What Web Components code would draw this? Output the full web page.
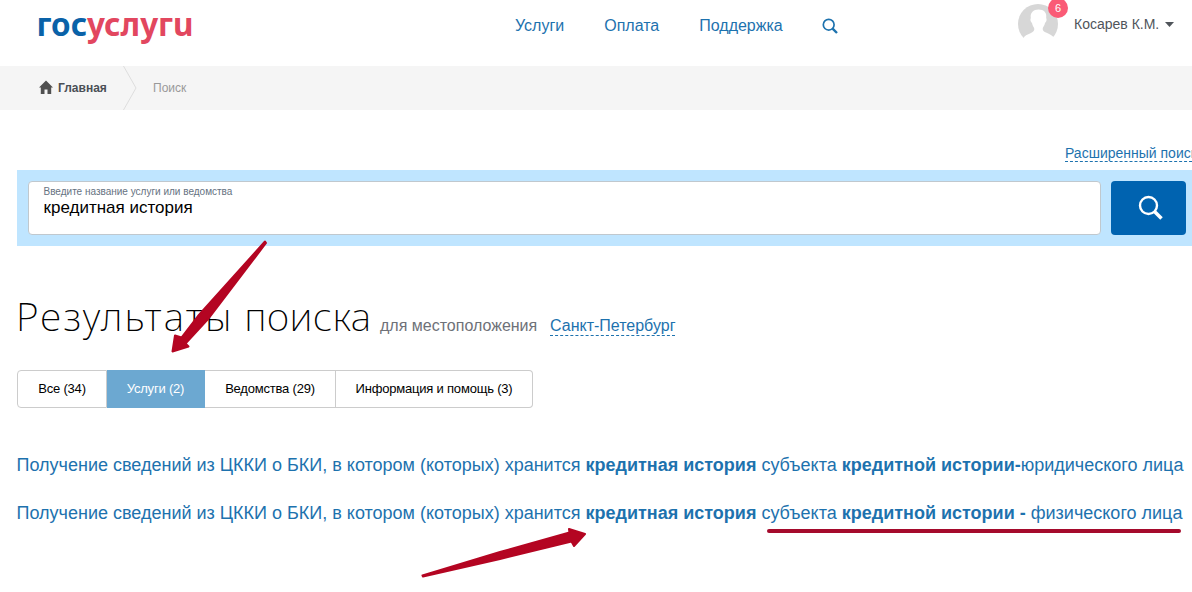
<!DOCTYPE html>
<html lang="ru">
<head>
<meta charset="utf-8">
<title>Поиск</title>
<style>
  body {
    margin: 0;
    width: 1192px;
    height: 592px;
    overflow: hidden;
    background: #fff;
    font-family: "Liberation Sans", Arial, sans-serif;
    color: #000;
  }
</style>
</head>
<body>
<search-page></search-page>

<script>
class SiteHeader extends HTMLElement {
  connectedCallback() {
    this.attachShadow({ mode: 'open' });
    this.shadowRoot.innerHTML = `
      <style>
        :host {
          display: flex;
          height: 66px;
          box-sizing: border-box;
          padding-left: 37px;
        }

        .logo {
          width: 478px;
          height: 60px;
          flex: none;
        }

        .logo text {
          font-family: "Noto Sans", sans-serif;
          font-weight: 700;
          font-size: 32px;
        }

        nav {
          display: flex;
          gap: 40px;
          padding-top: 16px;
          width: 503px;
          flex: none;
          font-size: 16px;
          line-height: 20px;
        }

        a {
          color: #1d72ae;
          text-decoration: none;
          white-space: nowrap;
        }

        nav svg {
          margin: 2px 0 0 -1px;
        }

        .user {
          display: flex;
          font-size: 14px;
          line-height: 20px;
          color: #50555b;
        }

        .avatar {
          position: relative;
          width: 56px;
          height: 50px;
        }

        .badge {
          position: absolute;
          left: 30px;
          top: -2px;
          width: 20px;
          height: 20px;
          border-radius: 50%;
          background: #fa5b76;
          color: #fff;
          font-size: 11px;
          text-align: center;
        }

        .name {
          margin-top: 14px;
          white-space: nowrap;
        }

        .caret {
          margin: 22px 0 0 6px;
        }
      </style>

      <svg class="logo" viewBox="0 0 478 60">
        <text y="36" x="-0.500" textLength="157" lengthAdjust="spacingAndGlyphs" fill="#e2475f"><tspan fill="#0a62a8">гос</tspan>услугu</text>
      </svg>
      <nav>
        <a>Услуги</a>
        <a>Оплата</a>
        <a>Поддержка</a>
        <svg width="16" height="16" viewBox="0 0 16 16" fill="none" stroke="#1d72ae">
          <circle cx="6.7" cy="6.7" r="5.4" stroke-width="1.7"/>
          <path d="M10.6 10.6L15 15" stroke-width="2.4"/>
        </svg>
      </nav>
      <div class="user">
        <div class="avatar">
          <svg width="42" height="46" viewBox="0 0 42 46">
            <circle cx="20" cy="24" r="20" fill="#d7d7d7"/>
            <path fill="#fff" d="M20.500 9.500c-5 0-8.500 3-7.700 8.500-.9 1.500-.2 4.200 1.200 5 .5 2.700 1.700 4 2.200 5.300.5 2.500-.8 3.500-3.200 4.600C9 34.500 6.500 35.500 5 38.500L8 45h24l4-7c-1.500-2.500-4-3.700-8-5.500-2.500-1.100-3.700-2.300-3.200-4.500.5-1.300 1.700-2.500 2.200-5 1.400-.8 2.100-3.500 1.200-5 .8-5.500-2.200-8.500-7.700-8.500z"/>
          </svg>
          <span class="badge">6</span>
        </div>
        <span class="name">Косарев К.М.</span>
        <svg class="caret" width="9" height="5"><path d="M0 0h9L4.500 5z" fill="#50555b"/></svg>
      </div>
    `;
  }
}

class BreadCrumbs extends HTMLElement {
  connectedCallback() {
    this.attachShadow({ mode: 'open' });
    this.shadowRoot.innerHTML = `
      <style>
        :host {
          display: flex;
          align-items: center;
          height: 44px;
          padding-left: 39px;
          background: #f5f5f5;
          font-size: 12px;
          color: #999;
        }

        .home {
          margin: 0 5px 2px 0;
        }

        b {
          width: 65px;
          color: #4a4f55;
        }

        .sep {
          margin-right: 16px;
        }
      </style>
      <svg class="home" width="14" height="14" viewBox="0 0 14 14">
        <path fill="#505050" d="M7 0.500L14 7.500h-1.800V14H8.500V9.500h-3V14H1.800V7.500H0z"/>
      </svg>
      <b>Главная</b>
      <svg class="sep" width="14" height="44" fill="none" stroke="#ddd"><path d="M.5 0L13 22 .5 44"/></svg>
      <span>Поиск</span>
    `;
  }
}

class SearchBar extends HTMLElement {
  connectedCallback() {
    this.attachShadow({ mode: 'open' });
    this.shadowRoot.innerHTML = `
      <style>
        :host {
          display: block;
          padding-left: 17px;
        }

        .advanced {
          display: flex;
          height: 60px;
          padding-left: 1048px;
          align-items: flex-end;
          box-sizing: border-box;
          font-size: 14px;
          white-space: nowrap;
        }

        .advanced a {
          color: #1d72ae;
          line-height: 16px;
          margin-bottom: 8px;
          border-bottom: 1px dashed #1d72ae;
        }

        .bar {
          display: flex;
          gap: 10px;
          height: 76px;
          box-sizing: border-box;
          padding: 11px 6px 11px 11px;
          background: #bfe5ff;
        }

        .field {
          flex: 1;
          box-sizing: border-box;
          border: 1px solid #c0c8ce;
          border-radius: 4px;
          background: #fff;
          padding: 4px 14.500px;
        }

        label {
          display: block;
          font-size: 10px;
          line-height: 12px;
          color: #66727f;
        }

        .value {
          font-size: 17px;
          line-height: 20px;
        }

        .button {
          display: flex;
          width: 75px;
          border-radius: 4px;
          background: #0063b0;
        }

        .button svg {
          margin: 14px 0 0 27px;
        }
      </style>
      <div class="advanced"><a>Расширенный поиск</a></div>
      <div class="bar">
        <div class="field">
          <label>Введите название услуги или ведомства</label>
          <div class="value">кредитная история</div>
        </div>
        <div class="button">
          <svg width="26" height="26" viewBox="0 0 26 26" fill="none" stroke="#fff">
            <circle cx="10.500" cy="10.500" r="8.500" stroke-width="2.400"/>
            <path d="M16.500 16.500L23.500 23.500" stroke-width="3.500"/>
          </svg>
        </div>
      </div>
    `;
  }
}

class ResultTab extends HTMLElement {
  connectedCallback() {
    this.attachShadow({ mode: 'open' });
    this.shadowRoot.innerHTML = `
      <style>
        :host {
          box-sizing: border-box;
          height: 38px;
          border: 1px solid #ccc;
          border-left-width: 0;
          text-align: center;
          font-size: 13px;
          letter-spacing: -0.2px;
          line-height: 36px;
          white-space: nowrap;
        }

        :host(:first-child) {
          border-left-width: 1px;
          border-radius: 4px 0 0 4px;
        }

        :host(:last-child) {
          border-radius: 0 4px 4px 0;
        }

        :host([active]) {
          border-color: #6ca8d1;
          background: #6ca8d1;
          color: #fff;
        }
      </style>
      <slot></slot>
    `;
  }
}

class ResultLink extends HTMLElement {
  connectedCallback() {
    this.attachShadow({ mode: 'open' });
    this.shadowRoot.innerHTML = `
      <style>
        :host {
          display: block;
          height: 48px;
          color: #1d72ae;
          font-size: 18px;
          line-height: 22px;
          white-space: nowrap;
        }
      </style>
      <slot></slot>
    `;
  }
}

// Hand-drawn pointers laid over the page
class PageMarks extends HTMLElement {
  connectedCallback() {
    this.attachShadow({ mode: 'open' });
    this.shadowRoot.innerHTML = `
      <style>
        :host {
          position: absolute;
          left: 0;
          top: 0;
        }

        svg {
          display: block;
        }
      </style>
      <svg width="1192" height="592" fill="#b40522" stroke="#b40522" stroke-linejoin="round" stroke-linecap="round">
        <path d="M265 241.500L198 316 181.500 337.500 175 335.500 172.500 351.500 188.500 346.500 185.500 343.500 209 318 266 243z" stroke-width="2"/>
        <path d="M422.500 575.500L500 552 569.500 532.500 569 529 585 534 574 546 571.500 541.500 500 559 423 576.500z" stroke-width="2"/>
        <path d="M769 531h410" stroke="#a50a2c" stroke-width="4"/>
      </svg>
    `;
  }
}

class SearchPage extends HTMLElement {
  connectedCallback() {
    this.attachShadow({ mode: 'open' });
    this.shadowRoot.innerHTML = `
      <style>
        :host {
          display: block;
        }

        .title {
          display: flex;
          align-items: baseline;
          height: 124px;
          box-sizing: border-box;
          padding: 43px 0 0 16px;
          white-space: nowrap;
        }

        h1 {
          margin: 0;
          width: 364px;
          font-family: "Noto Sans", "Open Sans", sans-serif;
          font-size: 39px;
          font-weight: 200;
          letter-spacing: 2.2px;
          line-height: 54px;
        }

        h1 span {
          letter-spacing: 0.5px;
        }

        .place {
          width: 170px;
          font-size: 16px;
          color: #6e7178;
        }

        .city {
          font-size: 16px;
          color: #1d72ae;
          border-bottom: 1px dashed #1d72ae;
        }

        .tabs {
          display: flex;
          padding-left: 17px;
        }

        .results {
          padding: 46px 0 0 16.500px;
        }
      </style>
      <site-header></site-header>
      <bread-crumbs></bread-crumbs>
      <search-bar></search-bar>
      <div class="title">
        <h1>Результаты<span> поиска</span></h1>
        <span class="place">для местоположения</span>
        <span class="city">Санкт-Петербург</span>
      </div>
      <div class="tabs">
        <result-tab style="width: 90px">Все (34)</result-tab>
        <result-tab style="width: 98px" active>Услуги (2)</result-tab>
        <result-tab style="width: 131px">Ведомства (29)</result-tab>
        <result-tab style="width: 197px">Информация и помощь (3)</result-tab>
      </div>
      <div class="results">
        <result-link>Получение сведений из ЦККИ о БКИ, в котором (которых) хранится <b>кредитная история</b> субъекта <b>кредитной истории-</b>юридического лица</result-link>
        <result-link>Получение сведений из ЦККИ о БКИ, в котором (которых) хранится <b>кредитная история</b> субъекта <b>кредитной истории -</b> физического лица</result-link>
      </div>
      <page-marks></page-marks>
    `;
  }
}

customElements.define('site-header', SiteHeader);
customElements.define('bread-crumbs', BreadCrumbs);
customElements.define('search-bar', SearchBar);
customElements.define('result-tab', ResultTab);
customElements.define('result-link', ResultLink);
customElements.define('page-marks', PageMarks);
customElements.define('search-page', SearchPage);
</script>
</body>
</html>
